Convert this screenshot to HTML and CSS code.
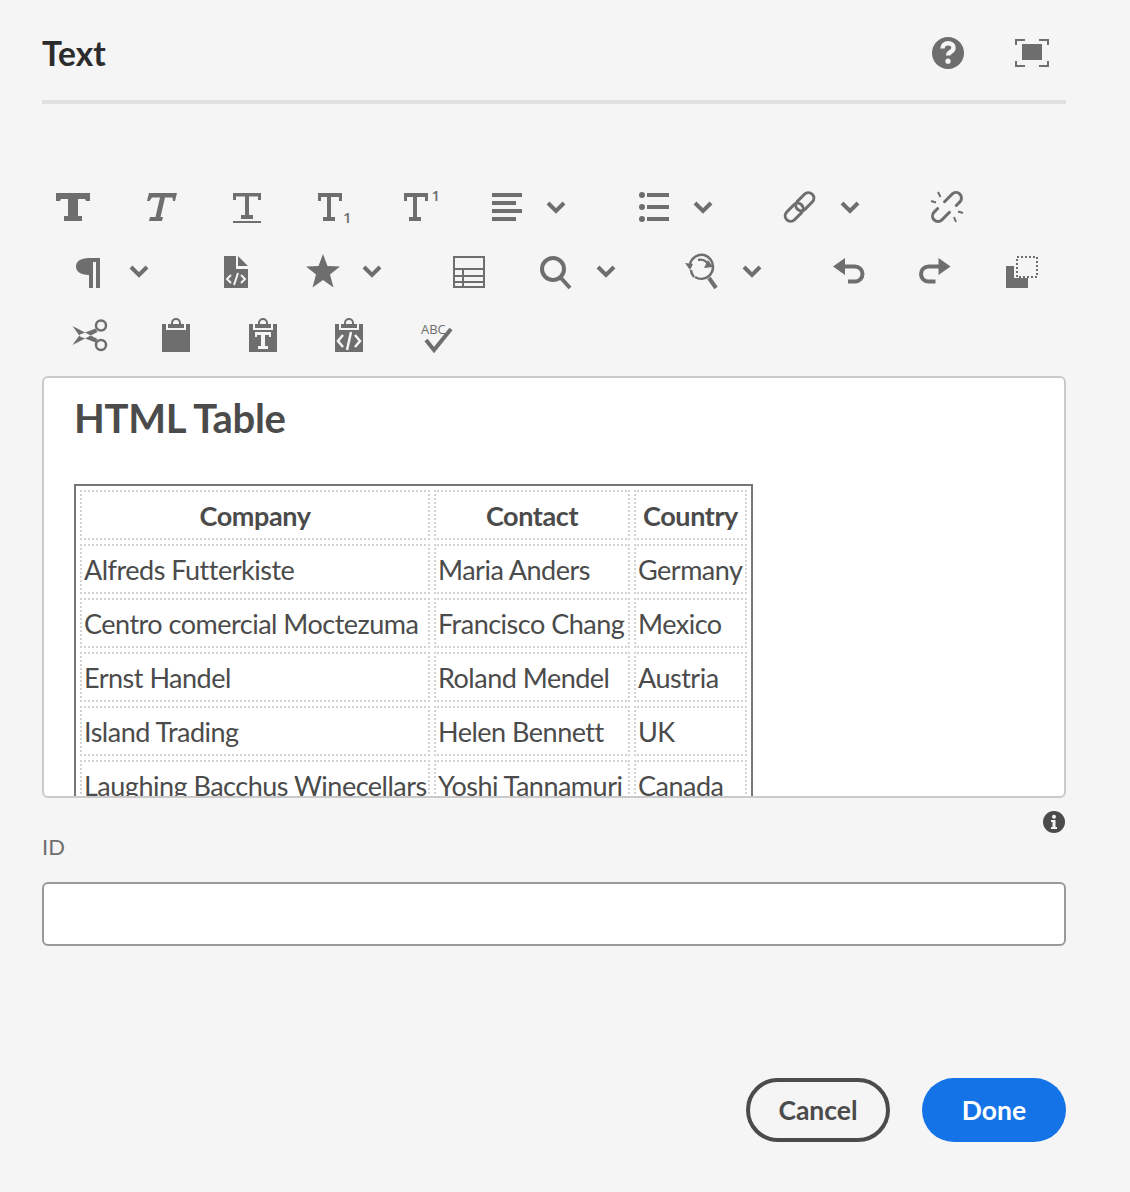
FILE: index.html
```html
<!DOCTYPE html>
<html lang="en">
<head>
<meta charset="utf-8">
<title>Text</title>
<link rel="stylesheet" href="styles.css">
</head>
<body>
<main class="dialog">
  <header class="head">
    <h2 class="title">Text</h2>
    <div class="head-actions">
      <svg class="ico" viewBox="0 0 36 36"><circle cx="18" cy="18" r="16" fill="#6e6e6e"/><path class="w3" d="M12.5 13.5c0-3.4 2.4-5.2 5.6-5.2 3.2 0 5.4 1.8 5.4 4.6 0 4-5.4 4-5.4 7.5"/><circle cx="18" cy="26.2" r="2.6" fill="#f5f5f5"/></svg>
      <svg class="ico" viewBox="0 0 36 36"><path class="s2" d="M2 10V5h9M25 5h9v5M34 26v5h-9M11 31H2v-5"/><rect x="8" y="9" width="20" height="16" fill="#6e6e6e"/></svg>
    </div>
  </header>

  <div class="toolbar">
    <div class="row row-a">
      <button class="btn"><svg class="ico" viewBox="0 0 36 36"><path class="f" d="M1 4h34v8h-4l-1-2h-7v17h4v5H9v-5h4V10H6l-1 2H1z"/></svg></button>
      <button class="btn"><svg class="ico" viewBox="0 0 36 36"><path class="f" d="M7 4h28l-2 8h-2l-.5-3.500H23L18.500 28H21l-1 4H7l1-4h5.500L18 8.500h-8L7.500 12H5z"/></svg></button>
      <button class="btn"><svg class="ico" viewBox="0 0 36 36"><path class="f" d="M4 4h28v7h-3V7.500h-9V26h4v4H12v-4h4V7.500H7V11H4zM4 32h28v2H4z"/></svg></button>
      <button class="btn"><svg class="ico" viewBox="0 0 36 36"><path class="f" d="M3 4h24v8h-3V8h-8v20h4v4H8v-4h4V8H6v4H3z"/><text class="sm" x="28" y="34">1</text></svg></button>
      <button class="btn"><svg class="ico" viewBox="0 0 36 36"><path class="f" d="M2 4h24v8h-3V8h-8v20h4v4H7v-4h4V8H5v4H2z"/><text class="sm" x="29.500" y="12">1</text></svg></button>
      <div class="split"><svg class="ico" viewBox="0 0 36 36"><path class="f" d="M3 4h30v4H3zM3 12h24v4H3zM3 20h30v4H3zM3 28h24v4H3z"/></svg><svg class="chev" viewBox="0 0 24 36"><path d="M4 14l8 8 8-8"/></svg></div>
      <div class="split"><svg class="ico" viewBox="0 0 36 36"><circle class="f" cx="6" cy="6" r="3"/><circle class="f" cx="6" cy="18" r="3"/><circle class="f" cx="6" cy="30" r="3"/><path class="f" d="M11 4h22v4H11zM11 16h22v4H11zM11 28h22v4H11z"/></svg><svg class="chev" viewBox="0 0 24 36"><path d="M4 14l8 8 8-8"/></svg></div>
      <div class="split"><svg class="ico" viewBox="0 0 36 36"><g transform="translate(-1.500 0) rotate(-45 18 18)"><rect class="s3" x="15" y="12.500" width="21" height="11" rx="5.500"/><rect class="s3" x="0" y="12.500" width="21" height="11" rx="5.500"/></g></svg><svg class="chev" viewBox="0 0 24 36"><path d="M4 14l8 8 8-8"/></svg></div>
      <button class="btn"><svg class="ico" viewBox="0 0 36 36"><g transform="rotate(-45 18 18)"><path class="s3" d="M20 12.500h10.700a5.500 5.500 0 0 1 0 11h-5M16 23.500H5.300a5.500 5.500 0 0 1 0-11h5"/></g><path class="s2" d="M9 3l2.500 5M2 12l5 1.500M27 33l-2-5M34 24l-5-1.500"/></svg></button>
    </div>
    <div class="row row-b">
      <div class="split"><svg class="ico" viewBox="0 0 36 36"><path class="f" d="M17 5h11v30h-4V9h-3v26h-4V22C8 22 4 18 4 13.500S8 5 17 5z"/></svg><svg class="chev" viewBox="0 0 24 36"><path d="M4 14l8 8 8-8"/></svg></div>
      <button class="btn"><svg class="ico" viewBox="0 0 36 36"><path class="f" d="M6 3h12v13h12v19H6zM20 3l10 10H20z"/><path class="w2" d="M13 22l-4 4 4 4M23 22l4 4-4 4M20 20l-4 12"/></svg></button>
      <div class="split"><svg class="ico" viewBox="0 0 36 36"><path class="f" d="M18 1l4.500 12L35 13.500 25 21.500 28.500 34.500 18 27 7.500 34.500 11 21.500 1 13.500 13.500 13z"/></svg><svg class="chev" viewBox="0 0 24 36"><path d="M4 14l8 8 8-8"/></svg></div>
      <button class="btn"><svg class="ico" viewBox="0 0 36 36"><path class="s2" d="M3 4h30v30H3zM3 16h30M3 23h30M3 29h30M12 16v18"/></svg></button>
      <div class="split"><svg class="ico" viewBox="0 0 36 36"><circle class="s4" cx="14" cy="16" r="11"/><path class="s4" d="M22 25l9 10"/></svg><svg class="chev" viewBox="0 0 24 36"><path d="M4 14l8 8 8-8"/></svg></div>
      <div class="split"><svg class="ico" viewBox="0 0 36 36"><path class="s25" d="M5 11a12 12 0 0 1 14-9 12 12 0 0 1 9 12 12 12 0 0 1-4 9 12 12 0 0 1-14 1M6 17a11 11 0 0 0 3 7M13 7a9 9 0 0 1 10 4"/><path class="f" d="M0 10l8 1-3 6zM19 15l4-8 5 7z"/><path class="s4" d="M24 25l7 10"/></svg><svg class="chev" viewBox="0 0 24 36"><path d="M4 14l8 8 8-8"/></svg></div>
      <button class="btn"><svg class="ico" viewBox="0 0 36 36"><path class="f" d="M2 13.500L14 5v17z"/><path class="s4" d="M12 13.500h12a7.500 7.500 0 0 1 0 15h-7"/></svg></button>
      <button class="btn"><svg class="ico" viewBox="0 0 36 36"><path class="f" d="M32.500 13.500L20.500 5v17z"/><path class="s4" d="M22.500 13.500H10.500a7.500 7.500 0 0 0 0 15h7"/></svg></button>
      <button class="btn"><svg class="ico" viewBox="0 0 36 36"><path class="f" d="M2 13h8v12h14v10H2z"/><rect class="dots" x="13" y="4" width="20" height="20"/></svg></button>
    </div>
    <div class="row row-c">
      <button class="btn"><svg class="ico" viewBox="0 0 36 36"><circle class="s25" cx="30" cy="8.500" r="5"/><circle class="s25" cx="30" cy="28" r="5"/><path class="f" d="M1.500 9L26.500 22l-2 3.500L9 19.500zM1.500 28L26.500 15l-2-3.500L9 17.500z"/></svg></button>
      <button class="btn"><svg class="ico" viewBox="0 0 36 36"><path class="f" d="M4 7h28v28H4z"/><path class="s2" d="M14 7V6a4 4 0 0 1 8 0v1"/><path class="w2" d="M9 6v6h18V6"/></svg></button>
      <button class="btn"><svg class="ico" viewBox="0 0 36 36"><path class="f" d="M4 7h28v28H4z"/><path class="s2" d="M14 7V6a4 4 0 0 1 8 0v1"/><path class="w2" d="M9 6v6h18V6"/><path class="w-f" d="M10 15h16v5h-2v-2h-4v11h3v3H13v-3h3V18h-4v2h-2z"/></svg></button>
      <button class="btn"><svg class="ico" viewBox="0 0 36 36"><path class="f" d="M4 7h28v28H4z"/><path class="s2" d="M14 7V6a4 4 0 0 1 8 0v1"/><path class="w2" d="M9 6v6h18V6"/><path class="w25" d="M12 18l-5 6 5 6M24 18l5 6-5 6M20 15l-4 18"/></svg></button>
      <button class="btn"><svg class="ico" viewBox="0 0 36 36"><text class="abc" x="3" y="17">ABC</text><path class="s4" d="M8 23l8 10 17-21"/></svg></button>
    </div>
  </div>

  <div class="editor">
    <h1 class="doc-title">HTML Table</h1>
    <table class="grid">
      <colgroup><col class="c1"><col class="c2"><col class="c3"></colgroup>
      <tr><th>Company</th><th>Contact</th><th>Country</th></tr>
      <tr><td>Alfreds Futterkiste</td><td>Maria Anders</td><td>Germany</td></tr>
      <tr><td>Centro comercial Moctezuma</td><td>Francisco Chang</td><td>Mexico</td></tr>
      <tr><td>Ernst Handel</td><td>Roland Mendel</td><td>Austria</td></tr>
      <tr><td>Island Trading</td><td>Helen Bennett</td><td>UK</td></tr>
      <tr><td>Laughing Bacchus Winecellars</td><td>Yoshi Tannamuri</td><td>Canada</td></tr>
    </table>
  </div>

  <div class="info-row"><svg class="info" viewBox="0 0 22 22"><circle cx="11" cy="11" r="11" fill="#4b4b4b"/><circle cx="11" cy="5.800" r="2" fill="#f5f5f5"/><path fill="#f5f5f5" d="M8 9h4.500v7H14v2H8v-2h1.500v-5H8z"/></svg></div>
  <label class="id-label" for="id-field">ID</label>
  <input class="id-input" id="id-field" type="text">

  <footer class="actions">
    <button class="pill cancel">Cancel</button>
    <button class="pill done">Done</button>
  </footer>
</main>
</body>
</html>
```
FILE: styles.css
```css
* { box-sizing: border-box; }
html, body { margin: 0; padding: 0; }
body {
  width: 1130px;
  height: 1192px;
  background: #f5f5f5;
  color: #4b4b4b;
  font-family: "Lato", "Open Sans", sans-serif;
  overflow: hidden;
}
.dialog { width: 1024px; margin-left: 42px; }

.head {
  height: 104px;
  border-bottom: 4px solid #e1e1e1;
  display: flex;
  justify-content: space-between;
  align-items: flex-start;
}
.title {
  margin: 29px 0 0;
  font-size: 33.500px;
  line-height: 48px;
  font-weight: 700;
  color: #2c2c2c;
}
.head-actions { display: flex; gap: 48px; margin: 35px 16px 0 0; }

.ico { width: 36px; height: 36px; flex: none; display: block; overflow: visible; }
.f { fill: #6e6e6e; }
.s2, .s25, .s3, .s4, .w2, .w25, .w3 { fill: none; }
.s2 { stroke: #6e6e6e; stroke-width: 2; }
.s25 { stroke: #6e6e6e; stroke-width: 2.5; }
.s3 { stroke: #6e6e6e; stroke-width: 3; stroke-linecap: round; }
.s4 { stroke: #6e6e6e; stroke-width: 4; }
.w2 { stroke: #f5f5f5; stroke-width: 2; }
.w25 { stroke: #f5f5f5; stroke-width: 2.5; }
.w3 { stroke: #f5f5f5; stroke-width: 4.5; }
.w-f { fill: #f5f5f5; }
.dots { fill: none; stroke: #6e6e6e; stroke-width: 2; stroke-dasharray: 2 2; }
.sm { fill: #6e6e6e; font-size: 15px; font-family: "Open Sans", sans-serif; font-weight: 600; }
.abc { fill: #6e6e6e; font-size: 13px; font-family: "Open Sans", sans-serif; }

.toolbar { margin-top: 71px; }
.row { display: flex; height: 64px; align-items: center; }
.row-a { margin-left: -12px; }
.row-b { margin-left: 4px; }
.row-c { margin-left: 4px; }
.btn {
  width: 86.700px;
  height: 64px;
  padding: 0;
  border: 0;
  background: none;
  display: flex;
  align-items: center;
  justify-content: center;
}
.split {
  width: 146.600px;
  height: 64px;
  display: flex;
  align-items: center;
  padding-left: 26px;
  gap: 19px;
}
.chev { width: 24px; height: 36px; flex: none; }
.chev path { fill: none; stroke: #6e6e6e; stroke-width: 4; }

.editor {
  margin-top: 9px;
  height: 422px;
  background: #fff;
  border: 2px solid #cacaca;
  border-radius: 6px;
  overflow: hidden;
  padding: 0 0 0 30px;
}
.doc-title {
  margin: 14px 0 0;
  font-size: 40px;
  line-height: 52px;
  font-weight: 700;
  color: #4b4b4b;
  letter-spacing: -0.3px;
}
.grid {
  margin-top: 40px;
  table-layout: fixed;
  width: 679px;
  border: 2px solid #777;
  border-collapse: separate;
  border-spacing: 4px;
  font-size: 27px;
  letter-spacing: -0.5px;
  color: #4b4b4b;
}
.c1 { width: 350px; }
.c2 { width: 196px; }
.c3 { width: 113px; }
.grid th, .grid td {
  height: 50px;
  padding: 2px 2px 0;
  border: 2px dotted #d3d3d3;
  white-space: nowrap;
  overflow: visible;
  line-height: 44px;
}
.grid th { font-weight: 700; text-align: center; letter-spacing: -0.4px; }
.grid td { font-weight: 400; text-align: left; }

.info-row { display: flex; justify-content: flex-end; padding: 13px 1px 0 0; height: 34px; }
.info { width: 22px; height: 22px; display: block; }
.id-label { display: block; margin-top: 0; font-size: 22px; line-height: 30px; color: #6e6e6e; }
.id-input {
  display: block;
  margin-top: 20px;
  width: 100%;
  height: 64px;
  background: #fff;
  border: 2px solid #999;
  border-radius: 6px;
  padding: 0 16px;
}
.actions { display: flex; justify-content: flex-end; gap: 32px; margin-top: 132px; }
.pill {
  width: 144px;
  height: 64px;
  border-radius: 32px;
  font-family: inherit;
  font-size: 26.500px;
  font-weight: 700;
  padding: 0;
}
.cancel { background: transparent; border: 4px solid #4b4b4b; color: #4b4b4b; }
.done { background: #1473e6; border: 0; color: #fff; }
```
